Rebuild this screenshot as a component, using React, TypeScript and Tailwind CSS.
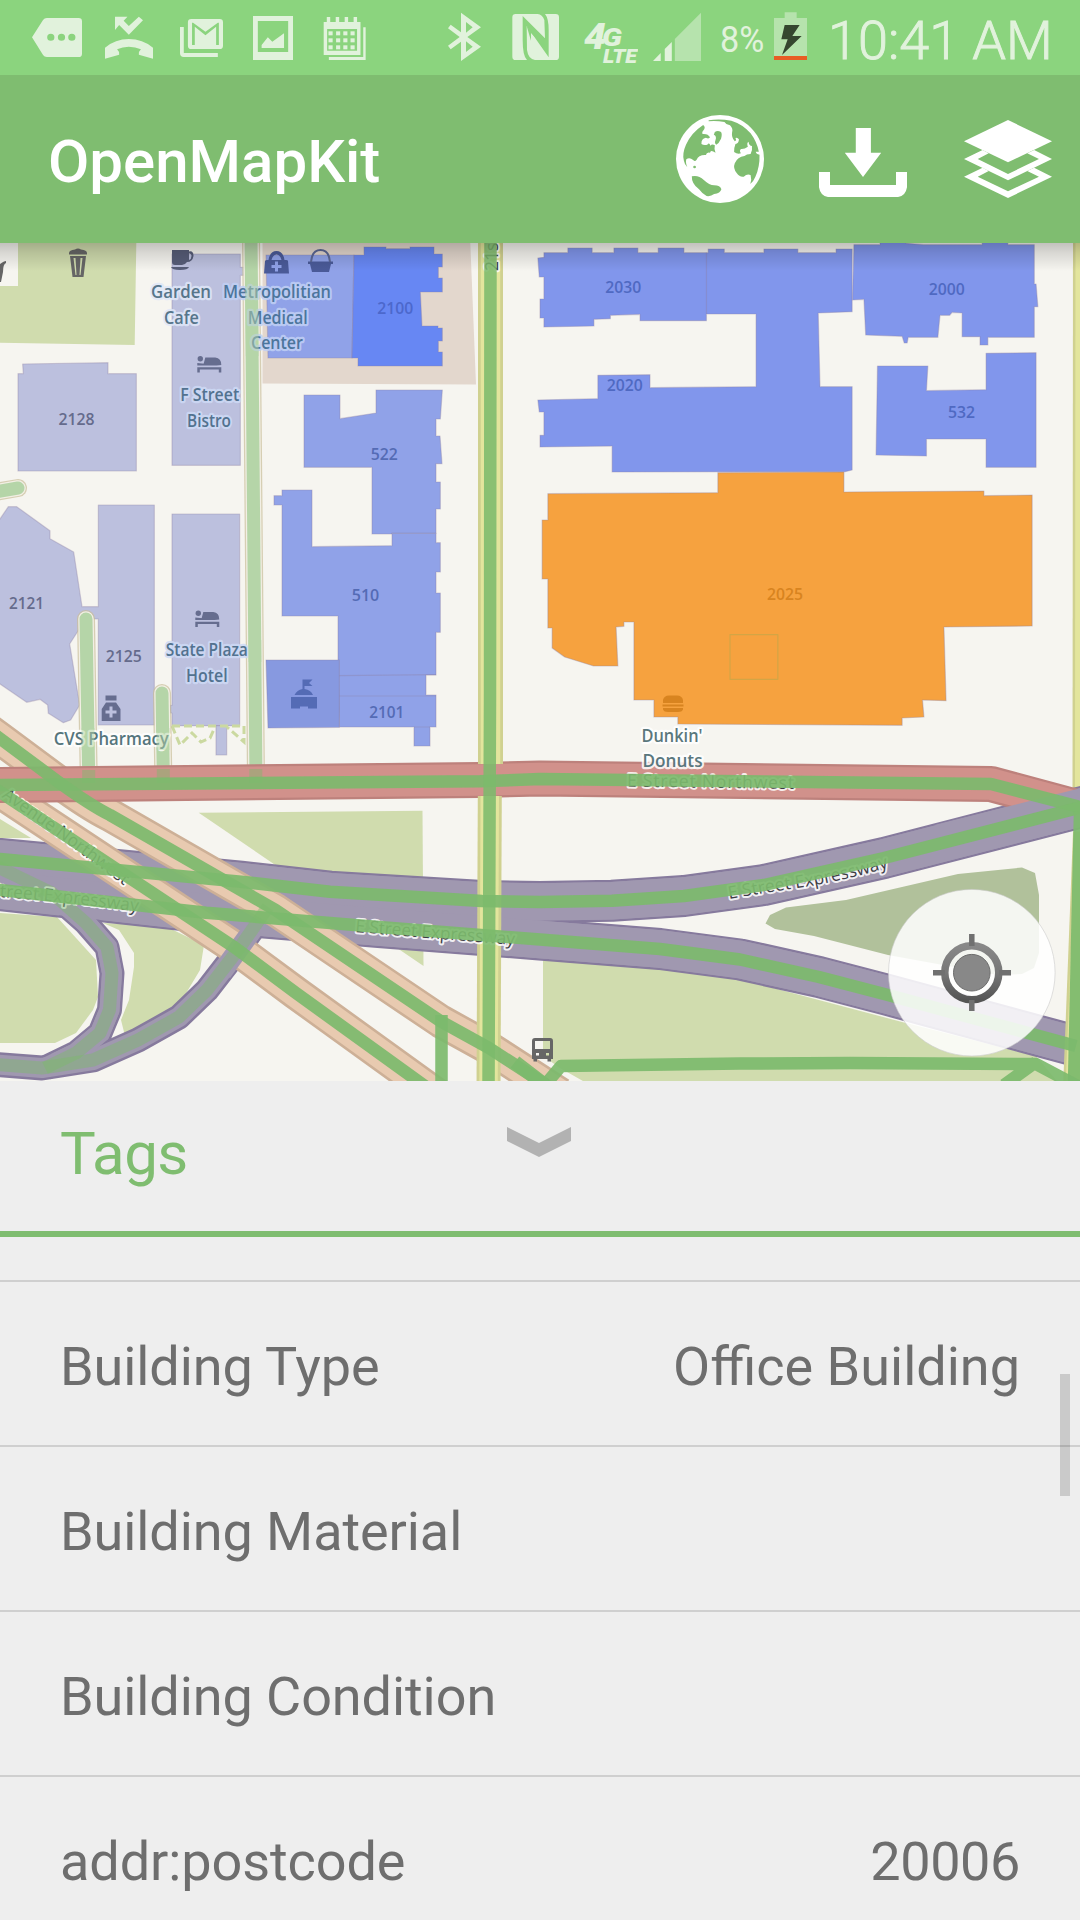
import React from "react";

const ICON = "#e1f2dc";

/* ---------- status bar ---------- */

function Glyph({ w, box, children }: { w: number; box: string; children: React.ReactNode }) {
  return (
    <svg className="block h-[75px] shrink-0" width={w} viewBox={box} preserveAspectRatio="none" fill={ICON}>
      {children}
    </svg>
  );
}

function StatusBar() {
  return (
    <div className="flex h-[75px] items-center bg-[#8bd47e] pl-[32px]">
      <Glyph w={50} box="93 0 145 225">
        <path
          fillRule="evenodd"
          d="M93 112 L125 60 Q129 54 136 54 H228 Q238 54 238 64 V161 Q238 171 228 171 H136 Q129 171 125 165Z M137 112a10.500 10.500 0 1 0 21 0a10.500 10.500 0 1 0 -21 0Z M168 112a10.500 10.500 0 1 0 21 0a10.500 10.500 0 1 0 -21 0Z M198 112a10.500 10.500 0 1 0 21 0a10.500 10.500 0 1 0 -21 0Z"
        />
      </Glyph>
      <div className="w-[23px]" />
      <Glyph w={48} box="305 0 139 225">
        <path d="M334 50H370L359 62L374 78L403 50L415 61L374 104L346 75L334 90Z" />
        <path d="M305 176V143Q335 117 374 117Q414 117 444 143V176L403 164Q401 156 409 148Q393 140 374 140Q356 140 340 148Q348 156 346 164Z" />
      </Glyph>
      <div className="w-[27px]" />
      <Glyph w={43} box="523 0 125 225">
        <path d="M523 81H534V159H633V171H534Q523 171 523 160Z" />
        <path
          fillRule="evenodd"
          d="M556 57H638Q648 57 648 67V137Q648 147 638 147H556Q546 147 546 137V67Q546 57 556 57ZM558 68V135H566V80L597 106L628 80V135H636V68H633L597 95L561 68Z"
        />
      </Glyph>
      <div className="w-[30px]" />
      <Glyph w={40} box="735 0 116 225">
        <path fillRule="evenodd" d="M735 48H851V180H735ZM749 63V156H837V63Z" />
        <path d="M760 144V135L778 112L791 125L825 100V144Z" />
      </Glyph>
      <div className="w-[30px]" />
      <Glyph w={43} box="939 0 125 225">
        <path
          fillRule="evenodd"
          d="M941 66H950V51H960V66H976V51H986V66H1002V51H1012V66H1028V51H1038V66H1048V165H941ZM951 87V152H1038V87Z"
        />
        {[94, 115, 136].map((y) =>
          [955, 977, 998, 1019].map((x) => <rect key={`${x}-${y}`} x={x} y={y} width="12" height="12" />),
        )}
        <path d="M1056 82H1063V180H956V171H1056Z" />
      </Glyph>
      <div className="w-[82px]" />
      <Glyph w={33} box="24 0 99 225">
        <path
          fillRule="evenodd"
          d="M63 38L123 82L82 111L123 140L63 183V125L32 148L24 137L59 111L24 85L32 74L63 97ZM78 66V98L98 82ZM78 124V156L98 140Z"
        />
      </Glyph>
      <div className="w-[31px]" />
      <Glyph w={48} box="217 0 144 225">
        <path d="M228 42H294Q308 44 314 60L316 115L249 48V120Q249 168 262 180H228Q218 180 218 170V52Q218 42 228 42Z" />
        <path d="M316 42H348Q358 42 358 52V170Q358 180 348 180H286Q266 178 262 150L261 78L327 172V90Q327 55 316 42Z" />
        <path d="M261 78L316 136V142L274 99V122Z" fill="#8bd47e" />
      </Glyph>
      <div className="w-[24px]" />
      <svg
        className="block h-[75px] shrink-0"
        width="54"
        viewBox="584 0 54 75"
        fill={ICON}
        fontFamily="Roboto"
        fontStyle="italic"
        fontWeight="900"
      >
        <text x="584" y="49" fontSize="37" textLength="22" lengthAdjust="spacingAndGlyphs">4</text>
        <text x="602" y="46" fontSize="26" textLength="20" lengthAdjust="spacingAndGlyphs">G</text>
        <text x="603" y="62.500" fontSize="20.500" textLength="34" lengthAdjust="spacingAndGlyphs">LTE</text>
      </svg>
      <div className="w-[15px]" />
      <Glyph w={48} box="640 0 143 225">
        <path d="M640 183L663 159V183ZM675 183V147L696 126V183Z" />
        <path d="M705 183V117L783 38V183Z" opacity=".5" />
      </Glyph>
      <div className="ml-[19px] w-[44px] whitespace-nowrap pt-[4px] text-[36px] leading-[36px] text-[#e1f2dc]">
        <span className="inline-block origin-left scale-x-[.95]">8%</span>
      </div>
      <div className="w-[10px]" />
      <Glyph w={33} box="1002 0 99 225">
        <path d="M1002 54H1034V37H1070V54H1101V168H1002Z" opacity=".5" />
        <path d="M1002 168H1101V180H1002Z" fill="#e85d24" />
        <path d="M1034 75H1079L1057 108H1085L1026 165L1043 118H1024Z" fill="#35472f" />
      </Glyph>
      <div className="ml-[21px] whitespace-nowrap pt-[6px] text-[54px] font-light leading-[54px] text-[#e1f2dc] [-webkit-text-stroke:0.9px_#e1f2dc]">
        10:41 AM
      </div>
    </div>
  );
}

/* ---------- toolbar ---------- */

function Toolbar() {
  return (
    <header className="flex h-[168px] items-center justify-between bg-[#7fbd70] pl-[48px] pr-[28px] text-white">
      <h1 className="whitespace-nowrap pt-[5px] text-[60px] font-medium leading-[70px]">OpenMapKit</h1>
      <div className="flex">
        <svg width="88" height="88" viewBox="395 345 256 264" preserveAspectRatio="none">
          <ellipse cx="523" cy="477" rx="128" ry="132" fill="#fff" />
          <g fill="#7fbd70">
            <path d="M474 375Q440 398 424 434Q412 462 418 482Q420 494 428 502Q422 488 425 478Q434 470 445 480Q450 487 455 479Q460 464 482 465Q484 455 494 458Q495 448 510 458Q505 448 508 436Q500 430 495 437Q492 426 486 434Q476 437 469 432Q468 415 482 413Q490 418 494 412Q488 400 472 402Q470 395 477 388Q481 380 474 375Z" />
            <path d="M508 396Q516 390 526 396Q530 402 526 416Q520 430 512 434Q506 430 510 420Q514 408 505 404Z" />
            <path d="M490 361Q520 356 556 362Q590 373 612 400Q630 425 636 455L627 455Q628 462 638 464Q639 500 626 530Q620 545 611 552Q616 540 612 525Q602 520 592 530Q580 532 572 520Q560 505 566 490Q574 470 594 468Q600 462 612 462Q618 450 616 438Q608 438 606 425Q600 428 604 440Q594 448 584 447Q578 452 584 460Q574 464 564 456Q563 445 568 432Q578 430 578 418Q574 412 568 414Q572 422 566 424Q556 412 558 398Q562 386 552 376Q540 374 536 366Q512 362 490 364Z" />
            <path d="M441 529Q460 524 476 540Q492 556 506 556Q524 556 527 568Q524 580 506 582Q496 590 484 588Q470 580 462 568Q440 552 441 529Z" />
            <circle cx="449" cy="501" r="4" />
          </g>
        </svg>
        <svg className="ml-[55px]" width="88" height="88" viewBox="810 345 256 264" preserveAspectRatio="none" fill="#fff">
          <path d="M917 384H961V458H991L938 531L885 458H917Z" />
          <path d="M810 516H842V555H1034V516H1066V562Q1062 588 1040 591H836Q814 588 810 562Z" />
        </svg>
        <svg className="ml-[57px]" width="88" height="88" viewBox="1231 345 256 264" preserveAspectRatio="none" fill="#fff">
          <path d="M1231 424L1359 360L1487 424L1359 487Z" />
          <path d="M1285 450L1231 477L1359 541L1487 477L1435 450L1415 460L1449 477L1359 522L1271 477L1303 460Z" />
          <path d="M1285 503L1231 530L1359 594L1487 530L1435 503L1415 513L1449 530L1359 574L1271 530L1303 513Z" />
        </svg>
      </div>
    </header>
  );
}

/* ---------- map ---------- */

const BLUE = "#90a2e8";
const DEEP = "#8196ec";
const LILAC = "#bcc0de";
const PARK = "#d0dcae";
const ROUTE = "#7cba6c";

const RED = "M-10 785L480 780L540 778.500L991 784L1084 809";
const RED_ROUTE = "M-10 785.200L480 781.300L540 779L991 784L1084 808";
const AVE_A = "M-30 717L0 738.500L58.500 782Q90 805 110 815L275.500 910L441 1021.500L489 1048L560 1094";
const AVE_B = "M-30 772L0 792L234 947L296 993L440 1097";
const EXP_X = "M-10 858L0 859L241 881.700L330 891.700L482 901L540 902L612 900.700L684 896L764 885L884 858L1090 805";
const EXP_Y = "M-10 889L0 890L206 912.700L379 927L540 939.500L660 949L740 959.500L819 977L888 995L1076 1046";
const LOOP = "M-20 860L0 868L52 893L86 923L107 947L112 973L109.500 1010L100 1033L76 1053L45 1068";
const RAMP = "M-10 1064L42 1068L93 1060L138 1040L179 1017L207 990L238 950L268 907";
const MAIN_ST = "M490.500 236L490 700L488.500 1090";
const SIDE_ST = "M251 236L256 782";

const NUMBERS: [string, number, number, number, string][] = [
  ["2128", 76.5, 425, 36, "#656b8c"],
  ["2100", 395.3, 314, 36, "#4c68cc"],
  ["522", 384.3, 460, 27, "#546bb5"],
  ["2121", 26.5, 609, 35, "#656b8c"],
  ["2125", 123.7, 661.7, 36, "#656b8c"],
  ["510", 365.5, 600.7, 27.5, "#546bb5"],
  ["2101", 386.8, 718, 35, "#546bb5"],
  ["2030", 623.2, 292.7, 36, "#4f69c2"],
  ["2000", 946.8, 295.3, 36, "#4f69c2"],
  ["2020", 624.8, 390.7, 36, "#4f69c2"],
  ["532", 961.4, 418, 27, "#4f69c2"],
  ["2025", 785, 600, 36, "#d88420"],
];

const PLACES: [string, number, number, number, string, string][] = [
  ["Garden", 181, 298, 60, "#56758a", "#dfe7f8"],
  ["Cafe", 181.5, 323.5, 35, "#56758a", "#dfe7f8"],
  ["Metropolitian", 277, 298, 108, "#4c759c", "#c0d0f4"],
  ["Medical", 277.7, 323.5, 60, "#4c759c", "#c0d0f4"],
  ["Center", 277, 349, 52, "#4c759c", "#c0d0f4"],
  ["F Street", 209.7, 401.2, 59, "#52728f", "#cddaf5"],
  ["Bistro", 209, 426.5, 44, "#52728f", "#cddaf5"],
  ["State Plaza", 206.8, 656.2, 82, "#52728f", "#cddaf5"],
  ["Hotel", 206.8, 681.7, 41.6, "#52728f", "#cddaf5"],
  ["CVS Pharmacy", 111.3, 744.7, 115, "#55757c", "#ffffff"],
  ["Dunkin'", 672, 741.7, 61, "#5a777d", "#ffffff"],
  ["Donuts", 672.5, 767.3, 60, "#5a777d", "#ffffff"],
];

function Road({ d, outer, inner, w, edge = 2.2 }: { d: string; outer: string; inner: string; w: number; edge?: number }) {
  return (
    <g fill="none" strokeLinejoin="round">
      <path d={d} stroke={outer} strokeWidth={w} />
      <path d={d} stroke={inner} strokeWidth={w - edge * 2} />
    </g>
  );
}

function Bed({ x, y }: { x: number; y: number }) {
  return (
    <g transform={`translate(${x} ${y})`} fill="#666d8f">
      <circle cx="3" cy="2.700" r="2.700" />
      <path d="M8 1.500H18Q24 2 24 9H6ZM0 7L24 9.500V16.500H21.500V13.500H2.500V16.500H0V11.300H24V9.500H0Z" />
    </g>
  );
}

function MapView() {
  return (
    <svg className="block" width="1080" height="838" viewBox="0 243 1080 838" fontFamily="'Open Sans', 'Noto Sans', sans-serif">
      <defs>
        <linearGradient id="shade" x1="0" y1="0" x2="0" y2="1">
          <stop offset="0" stopColor="#000" stopOpacity=".21" />
          <stop offset=".35" stopColor="#000" stopOpacity=".12" />
          <stop offset="1" stopColor="#000" stopOpacity="0" />
        </linearGradient>
        <linearGradient id="knob" x1="0" y1="0" x2="0" y2="1">
          <stop offset="0" stopColor="#888" />
          <stop offset=".5" stopColor="#777" />
          <stop offset="1" stopColor="#555" />
        </linearGradient>
        <path id="lblNw" d="M627 786.500L800 789" />
        <path id="lblEast" d="M729 899L764 893L810 886Q850 879 890 867" />
        <path id="lblMid" d="M355 932L520 945.500" />
        <path id="lblWest" d="M-60 890L0 897Q70 902 140 912" />
        <path id="lblAve" d="M-36 770L0 796L60 838L134 893" />
      </defs>

      <rect y="243" width="1080" height="838" fill="#f6f5f0" />

      {/* parks and grounds */}
      <g fill={PARK}>
        <path d="M18 243H136.300L134.700 345L0 342.700V286H18Z" />
        <path d="M198.700 812.700L422.500 810.700L423.500 966Z" />
        <path d="M0 913L57 917L96 960L98 997L93 1010L76 1033L55 1043H0Z" />
        <path d="M103 923L119 930L134 953V967L129 1000L121 1020L125 1036L152 1022L182 1000L200 970L204 945L165 926Z" />
        <path d="M0 819L31 838H0Z" />
        <path d="M543 955L736 978L902 1022L1036 1056L1060 1085H590L560 1068L543 1056Z" />
      </g>
      <path d="M765.500 923.500L770 915L786 907.500L846 900L958 874L1022 867.500L1035 873L1039 895V953L1034 968L1022 974L998 975L888 955L814 936L775 929Z" fill="#b1c19b" />
      <path d="M262.500 243H470.300L476 384.500L262.500 383.500Z" fill="#e3d7cd" />

      {/* yellow streets, upper part */}
      <Road d="M1084.500 236L1084 800" outer="#d0d190" inner="#e3e59d" w={23} edge={2.5} />

      {/* buildings */}
      <g strokeWidth="1.200" stroke="#8b7fa0" strokeOpacity=".35" strokeLinejoin="round">
        <g fill={LILAC} transform="translate(0 240) scale(.33333)" strokeWidth="3.600">
          <path d="M54 401H70L68 372L324 368V401H409V693H54Z" />
          <path d="M516 42H721V82H736V106H721V676H516Z" />
        </g>
        <g fill={LILAC} transform="translate(0 480) scale(.33333)" strokeWidth="3.600">
          <path d="M-9 130L25 80H50L150 152V176L221 216L246 380H295V75H463V735H295V417H257L209 492L239 675L212 720L190 728L145 700L143 675L120 658L80 667L-9 606Z" />
          <path d="M516 102H719V737H516V700L510 698V676H516Z" />
          <path d="M648 737H680V825H648Z" />
        </g>
        <g fill={BLUE} transform="translate(250 240) scale(.33333)" strokeWidth="3.600">
          <path d="M48 45H312L306 354H54Z" />
          <path d="M342 21H408V26H480V21H552V42H577V81H565V114H577V156H511L516 258H564V264H577V303H565V336H577V378H324V354H306L312 45H342Z" fill="#6787f3" />
          <path d="M162 465H270V536L378 519V450H577L571 537H558V588H570L576 671H558V726H571V807H558V880H426V882H366V682H162Z" />
        </g>
        <g fill={BLUE} transform="translate(250 480) scale(.33333)" strokeWidth="3.600">
          <path d="M96 30H186V200L426 197V160H558V188H571V276H558V339H571V457H558V585H528V645H558V741H540V798H492V741H268L264 540V408H96V75H72V47H96Z" />
          <path d="M48 540H268V742L54 744Z" fill="#8799e0" />
          <path d="M268 587L558 584M268 648H558M492 741H540" fill="none" />
        </g>
        <g fill={DEEP} transform="translate(520 240) scale(.35714 .33333)" strokeWidth="3.400">
          <path d="M67 38H134V24H202V38H263V24H330V38H387V24H459V38H527V27H572V38H683V27H778V38H885V27H930V215L835 219L840 440H930V690L910 695L258 696V618L56 621V586H67V516H54L50 480L218 476V406L364 404V443L661 440V222H522V242H336V223L253 226V236L207 238V258L67 261V234H56V177H67V111H54L50 54L67 52Z" />
          <path d="M522 38V222" fill="none" />
          <path d="M935 14H1008V0H1080V10L1130 14H1294V0H1366V14H1440V132H1445L1450 200H1440V292H1310V315H1288V290H1238V219L1210 217L1203 226H1176L1170 292H1087L1084 309H1076L1070 289L968 285L963 178L931 180Z" />
          <path d="M1001 378H1142L1138 452L1305 449V340L1445 338V682H1305V597H1138V648L997 645Z" />
        </g>
        <g transform="translate(520 470) scale(.35714 .33333)" strokeWidth="3.400">
          <path
            d="M554 8L907 6V66L1299 63V77L1434 75V468L1187 471L1193 692L1127 690L1131 741L1070 744V766L442 762V741H375V690H319V456H291V469L269 471L274 588H206L125 561L90 534V474H78V327H62V150H78V71L554 68Z"
            fill="#f6a23f"
          />
          <path d="M588 494H722V628H588Z" fill="none" stroke="#d3a545" strokeOpacity="1" />
        </g>
      </g>
      <path d="M172 726L180 745L192 733L201 742L210 738L215 727M172 726H244V742L227 727" fill="none" stroke="#cbd9a0" strokeWidth="3" strokeDasharray="8 4" />

      {/* side streets */}
      <g fill="none" strokeLinecap="round">
        {[
          [SIDE_ST, "side"],
          ["M86 619L88.700 775", "a"],
          ["M162 693L163.300 775", "b"],
          ["M-10 493L18 488", "c"],
        ].map(([d, k]) => (
          <g key={k}>
            <path d={d} stroke="#c9bd98" strokeOpacity=".7" strokeWidth="18" />
            <path d={d} stroke="#f2efe4" strokeWidth="15.500" />
            <path d={d} stroke="#b5d5a8" strokeWidth="13" />
          </g>
        ))}
      </g>

      {/* place marks */}
      <g fill="#666">
        <path d="M69 253Q69 250 75 249.500Q78 247.500 81 249.500Q87 250 87 253V254.500H69ZM70 256H86L83.500 277H72.500ZM73.500 258L75.500 275H76.500L75.500 258ZM82.500 258L80.500 275H79.500L80.500 258Z" fillRule="evenodd" />
        <path fillRule="evenodd" d="M172 250H189V251.500Q193.500 250.500 193.500 256Q192.500 262 187 262Q185 265 182 265H175Q172 265 172 262ZM189 253.500V260Q191.500 259 191.500 256Q191.500 253 189 253.500ZM171 267H189Q188 270 180 270Q172 270 171 267Z" fill="#575d78" />
        <path d="M0 264Q4 261 6 261V263Q3 264 3 272L1 282H0Z" />
      </g>
      <Bed x={197.3} y={356} />
      <Bed x={195.3} y={610.5} />
      <g fill="#4a5a98">
        <path
          fillRule="evenodd"
          d="M264 273.500L265 261Q265.500 260 267 260H268.500Q270 251 276.500 251Q283 251 284.500 260H286Q288 260 288 261L289 273.500ZM271.500 260H281.500Q280 254.500 276.500 254.500Q273 254.500 271.500 260ZM275 261.500V265H271.500V268H275V271.500H278V268H281.500V265H278V261.500Z"
        />
        <path d="M308 261.500H333V264H331L329 272H312L310 264H308Z" />
        <path d="M311 262Q312 250 320.500 250Q329 250 330 262" fill="none" stroke="#5b6795" strokeWidth="2" />
      </g>
      <g fill="#666d8f">
        <path d="M105.500 695.500H116.500V700.500H105.500Z" />
        <path fillRule="evenodd" d="M106 702.500H116L120.500 709V721H101.700V709ZM109.500 706.500V710.500H105.500V713.500H109.500V717.500H112.500V713.500H116.500V710.500H112.500V706.500Z" />
      </g>
      <path d="M302.500 679.500H312.500L309 683L312.500 686H304.500V689Q311 690 313 695H294.500Q297 690 302.500 689ZM291 697H317V708.500H308V706.500H300V708.500H291Z" fill="#546bb5" />
      <g fill="#d88420">
        <path d="M663 703V700Q664 695.500 669 695.500H677Q682 695.500 683 700V703ZM662.500 704.500H683.500V706.500H662.500ZM663 708H683V709.500Q682 712 678 712H668Q664 712 663 709.500Z" />
      </g>

      {/* trunk and primary roads */}
      <Road d={EXP_X} outer="#867a9d" inner="#a098b0" w={42} />
      <Road d={EXP_Y} outer="#867a9d" inner="#a098b0" w={42} />
      <Road d={LOOP} outer="#867a9d" inner="#a098b0" w={25} edge={2.5} />
      <Road d={RAMP} outer="#867a9d" inner="#a098b0" w={25} edge={2.5} />
      <path d={LOOP} fill="none" stroke="#a098b0" strokeWidth="20" />
      <path d={EXP_X} fill="none" stroke="#a098b0" strokeWidth="37.500" />
      <path d={EXP_Y} fill="none" stroke="#a098b0" strokeWidth="37.500" />
      <Road d={AVE_A} outer="#cdb097" inner="#e8cab0" w={34} edge={2.6} />
      <Road d={AVE_B} outer="#cdb097" inner="#e8cab0" w={34} edge={2.6} />
      <path d="M222 972L254 928" fill="none" stroke="#a098b0" strokeWidth="20" />
      <Road d={RED} outer="#bd817c" inner="#d1918b" w={36} />
      <path d="M940 843L1090 805" fill="none" stroke="#a098b0" strokeWidth="37.500" />
      <Road d="M1084 832L1074 1090" outer="#d0d190" inner="#e3e59d" w={22} edge={2.5} />
      <Road d="M490.500 236V764" outer="#d0d190" inner="#e3e59d" w={25} edge={2.8} />
      <Road d="M489.800 796L488.500 1090" outer="#d0d190" inner="#e3e59d" w={24} edge={2.8} />

      {/* street names */}
      <g fontSize="17.500" fontWeight="500" fill="#3d3d45" stroke="#fff" strokeWidth="4" strokeOpacity=".85" paintOrder="stroke" strokeLinejoin="round">
        <text textLength="167"><textPath href="#lblNw">E Street Northwest</textPath></text>
        <text textLength="163"><textPath href="#lblEast">E Street Expressway</textPath></text>
        <text textLength="160"><textPath href="#lblMid">E Street Expressway</textPath></text>
        <text><textPath href="#lblWest" startOffset="36">E Street Expressway</textPath></text>
        <text><textPath href="#lblAve" startOffset="46">Avenue Northwest</textPath></text>
        <text transform="translate(497.500 271) rotate(-90)">21st</text>
      </g>

      {/* editable ways */}
      <g fill="none" stroke={ROUTE} strokeWidth="13" strokeOpacity=".45" strokeLinejoin="round">
        <path d={LOOP} />
        <path d={RAMP} />
        <path d="M88.700 770V783M163.300 769V783M255.800 769V783" />
      </g>
      <g fill="none" stroke={ROUTE} strokeWidth="12.500" strokeOpacity=".92" strokeLinejoin="round">
        <path d={RED_ROUTE} />
        <path d={AVE_A} />
        <path d={AVE_B} />
        <path d={EXP_X} />
        <path d={EXP_Y} />
        <path d={MAIN_ST} strokeOpacity=".87" />
        <path d="M441.500 1015V1085" />
        <path d="M1080 812L1074 1085" />
        <path d="M545 1085L561 1066L740 1063.500L850 1063L1036 1064L1085 1090M1036 1062L1004 1085" />
        <path d="M515 1062L545 1085" strokeWidth="14" />
      </g>

      {/* bus stop */}
      <path fillRule="evenodd" d="M535 1038H550Q553 1038 553 1041V1059H551V1061.500H547.500V1059H537V1061.500H533.500V1059H532V1041Q532 1038 535 1038ZM535 1041V1049H550V1041ZM536 1053V1055.500H539V1053ZM546 1053V1055.500H549V1053Z" fill="#666" />

      {/* labels */}
      <g textAnchor="middle">
        {NUMBERS.map(([t, x, y, w, c]) => (
          <text key={t} x={x} y={y} fontSize="17" fontWeight="600" fill={c} textLength={w} lengthAdjust="spacingAndGlyphs">
            {t}
          </text>
        ))}
        {PLACES.map(([t, x, y, w, c, halo]) => (
          <text
            key={t}
            x={x}
            y={y}
            fontSize="17.500"
            fontWeight="600"
            fill={c}
            stroke={halo}
            strokeWidth="4.500"
            strokeOpacity=".85"
            strokeLinejoin="round"
            paintOrder="stroke"
            textLength={w}
            lengthAdjust="spacingAndGlyphs"
          >
            {t}
          </text>
        ))}
      </g>
      <g fill="none" stroke="#b5d5a8" strokeOpacity=".5" strokeWidth="13">
        <path d="M251.500 283L252.300 356M254.800 640L255 662M88 728V750M163 728V750" />
      </g>

      {/* locate button */}
      <circle cx="971.800" cy="972.700" r="83.300" fill="#fff" fillOpacity=".86" stroke="#ccc" strokeOpacity=".6" />
      <circle cx="971.800" cy="972.700" r="27" strokeWidth="7.500" stroke="url(#knob)" fill="none" />
      <path d="M971.800 934V946M971.800 1000V1011M933 972.700H945M999 972.700H1011" stroke="#707070" strokeWidth="5.500" />
      <circle cx="971.800" cy="972.700" r="18.300" fill="#888" stroke="#6c6c6c" strokeWidth="1" />

      <rect y="243" width="1080" height="28" fill="url(#shade)" />
    </svg>
  );
}

/* ---------- tags panel ---------- */

const ROWS: [string, string][] = [
  ["Building Type", "Office Building"],
  ["Building Material", ""],
  ["Building Condition", ""],
  ["addr:postcode", "20006"],
];

function TagsPanel() {
  return (
    <section className="relative flex h-[839px] flex-col overflow-hidden bg-[#eeeeee]">
      <div className="relative flex h-[156px] shrink-0 items-center border-b-[6px] border-[#7fbd70] pb-[5px] pl-[60px]">
        <h2 className="text-[60px] leading-[70px] tracking-[-0.5px] text-[#7fbd70]">Tags</h2>
        <svg className="absolute left-[507px] top-[46px]" width="64" height="30" viewBox="0 0 64 30" fill="#b2b2b2">
          <path d="M0 0L32 16L64 0V14L32 30L0 14Z" />
        </svg>
      </div>
      <div className="h-[43px] shrink-0" />
      {ROWS.map(([k, v]) => (
        <div
          key={k}
          className="flex h-[165px] shrink-0 items-center justify-between whitespace-nowrap border-t-2 border-[#cfcfcf] pl-[60px] pr-[60px] pt-[7px] text-[54px] leading-[64px] text-[#6e6e6e]"
        >
          <span className="tracking-[-0.08px]">{k}</span>
          <span className={v === "20006" ? "tracking-[-0.4px]" : ""}>{v}</span>
        </div>
      ))}
      <div className="absolute left-[1060px] top-[293px] h-[122px] w-[10px] bg-black/15" />
    </section>
  );
}

export default function App() {
  return (
    <div className="h-[1920px] w-[1080px] overflow-hidden bg-[#eeeeee] font-['Roboto',sans-serif]">
      <StatusBar />
      <Toolbar />
      <MapView />
      <TagsPanel />
    </div>
  );
}
